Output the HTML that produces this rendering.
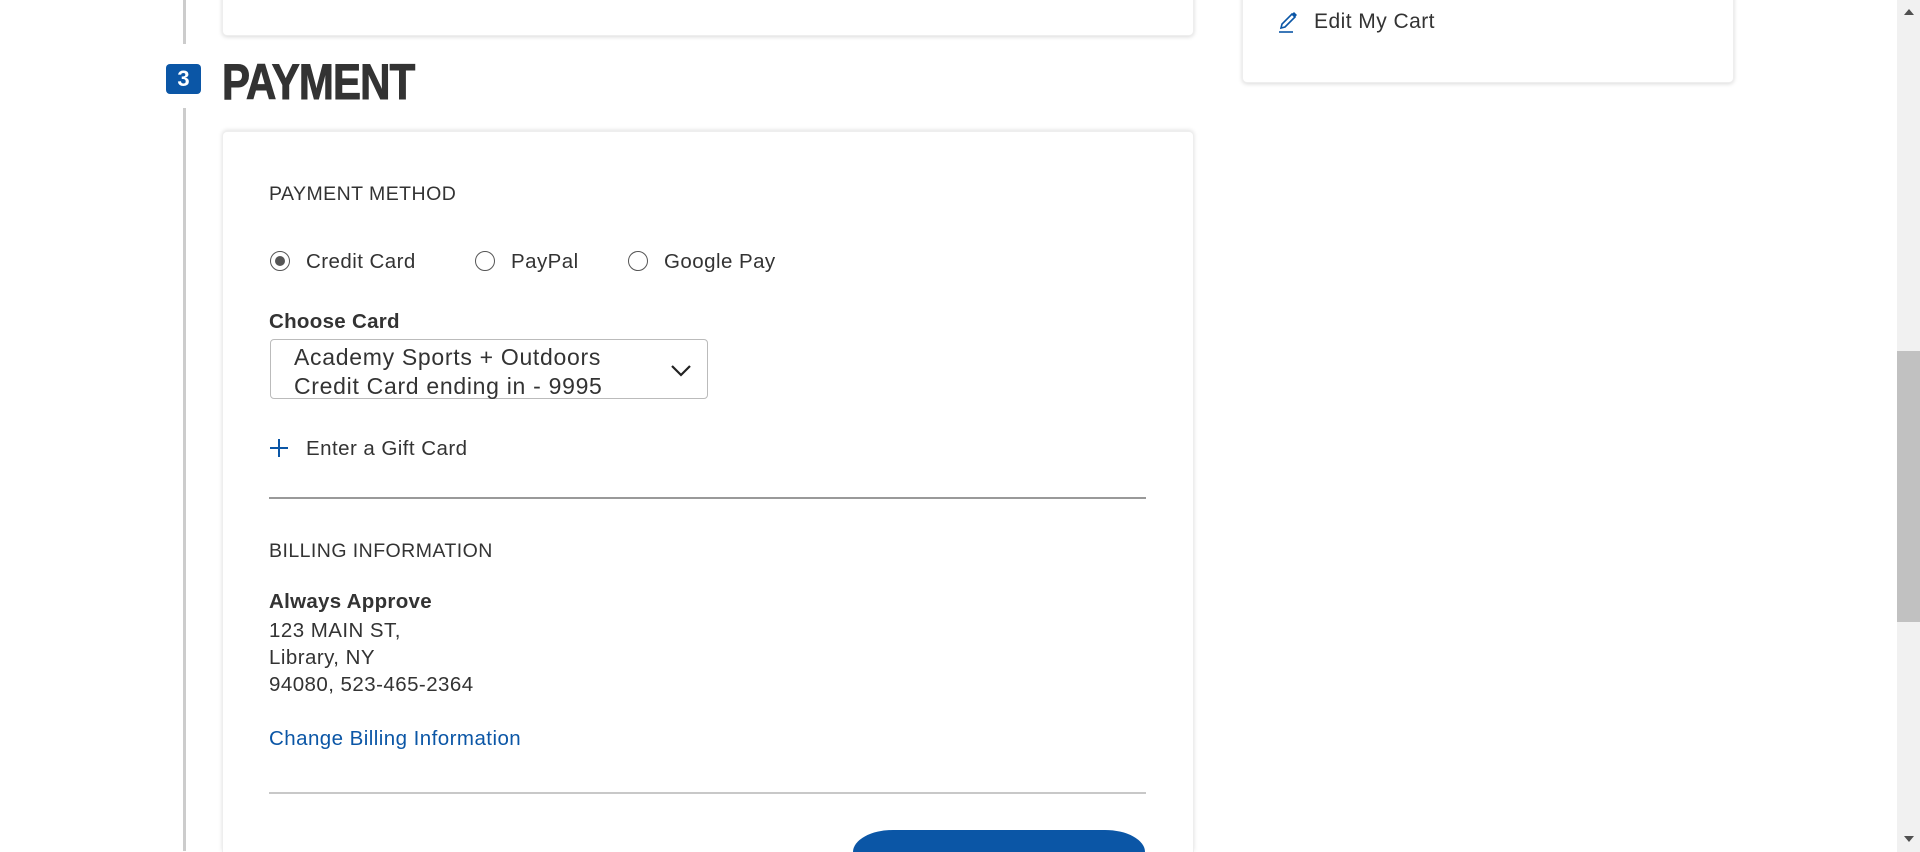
<!DOCTYPE html>
<html style="height:852px;overflow:hidden"><head><style>
*{margin:0;padding:0;box-sizing:border-box}
html,body{width:1920px;height:852px;overflow:hidden}
body{background:#fff;font-family:"Liberation Sans",sans-serif;color:#333;position:relative}
.a{position:absolute}
.card{position:absolute;background:#fff;border:1px solid #eee;border-radius:5px;box-shadow:0 1px 4px rgba(0,0,0,.15)}
.t{position:absolute;font-size:20.5px;line-height:24px;white-space:nowrap;letter-spacing:.45px}
.radio{position:absolute;width:20px;height:20px;border:1.5px solid #555;border-radius:50%}
</style></head><body>
<div class="a" style="left:183px;top:0;width:3px;height:44px;background:#ccc"></div>
<div class="a" style="left:183px;top:108px;width:3px;height:743px;background:#ccc"></div>
<div class="card" style="left:222px;top:-10px;width:972px;height:46px"></div>
<div class="card" style="left:1242px;top:-10px;width:492px;height:93px"></div>
<svg class="a" style="left:1277px;top:10px" width="24" height="24" viewBox="0 0 24 24"><path d="M4 18 L5 14 L15 4 L18 7 L8 17 Z" fill="none" stroke="#0b56a6" stroke-width="1.6"/><path d="M15 4 L17 2 L20 5 L18 7 Z" fill="#0b56a6"/><path d="M2 22 H16" stroke="#0b56a6" stroke-width="1.6"/></svg>
<div class="t" style="left:1314px;top:10px;font-size:21px">Edit My Cart</div>
<div class="a" style="left:166px;top:64px;width:35px;height:30px;background:#0b56a6;border-radius:4px;color:#fff;font-weight:bold;font-size:22px;line-height:30px;text-align:center">3</div>
<div class="a" style="left:222px;top:54px;font-weight:bold;font-size:50px;line-height:56px;color:#333;transform:scaleX(.84);transform-origin:left;letter-spacing:-1px;-webkit-text-stroke:1px #333">PAYMENT</div>
<div class="a" style="left:222px;top:131px;width:972px;height:721px;background:#fff;border:1px solid #eee;border-bottom:none;border-radius:5px 5px 0 0;box-shadow:0 -1px 4px rgba(0,0,0,.12)"></div>
<div class="t" style="left:269px;top:182px;font-size:19.5px">PAYMENT METHOD</div>
<div class="radio" style="left:270px;top:251px"><div style="position:absolute;left:3.5px;top:3.5px;width:10px;height:10px;border-radius:50%;background:#555"></div></div>
<div class="t" style="left:306px;top:250px">Credit Card</div>
<div class="radio" style="left:475px;top:251px"></div>
<div class="t" style="left:511px;top:250px">PayPal</div>
<div class="radio" style="left:628px;top:251px"></div>
<div class="t" style="left:664px;top:250px">Google Pay</div>
<div class="t" style="left:269px;top:310px;font-weight:bold;letter-spacing:.3px">Choose Card</div>
<div class="a" style="left:270px;top:339px;width:438px;height:60px;border:1.5px solid #bbb;border-radius:4px"></div>
<div class="t" style="left:294px;top:343px;font-size:23px;line-height:29px;letter-spacing:.7px">Academy Sports + Outdoors<br>Credit Card ending in - 9995</div>
<svg class="a" style="left:670px;top:364px" width="22" height="14" viewBox="0 0 22 14"><path d="M2 2 L11 11 L20 2" fill="none" stroke="#222" stroke-width="2.2"/></svg>
<svg class="a" style="left:269px;top:438px" width="20" height="20"><path d="M10 1V19M1 10H19" stroke="#0b56a6" stroke-width="2"/></svg>
<div class="t" style="left:306px;top:437px">Enter a Gift Card</div>
<div class="a" style="left:269px;top:497px;width:877px;height:2px;background:#999"></div>
<div class="t" style="left:269px;top:539px;font-size:19.5px">BILLING INFORMATION</div>
<div class="t" style="left:269px;top:590px;font-weight:bold;letter-spacing:.3px">Always Approve</div>
<div class="t" style="left:269px;top:617px;line-height:27px">123 MAIN ST,<br>Library, NY<br>94080, 523-465-2364</div>
<div class="t" style="left:269px;top:727px;color:#0b56a6">Change Billing Information</div>
<div class="a" style="left:269px;top:792px;width:877px;height:2px;background:#c8c8c8"></div>
<div class="a" style="left:853px;top:830px;width:292px;height:22px;background:#0b56a6;border-radius:40px 40px 0 0 / 22px 22px 0 0"></div>
<div class="a" style="left:1897px;top:0;width:23px;height:852px;background:#f1f1f1"></div>
<div class="a" style="left:1897px;top:351px;width:23px;height:271px;background:#c1c1c1"></div>
<div class="a" style="left:1904px;top:9px;border-left:5px solid transparent;border-right:5px solid transparent;border-bottom:6px solid #505050"></div>
<div class="a" style="left:1904px;top:836px;border-left:5px solid transparent;border-right:5px solid transparent;border-top:6px solid #505050"></div>
</body></html>
